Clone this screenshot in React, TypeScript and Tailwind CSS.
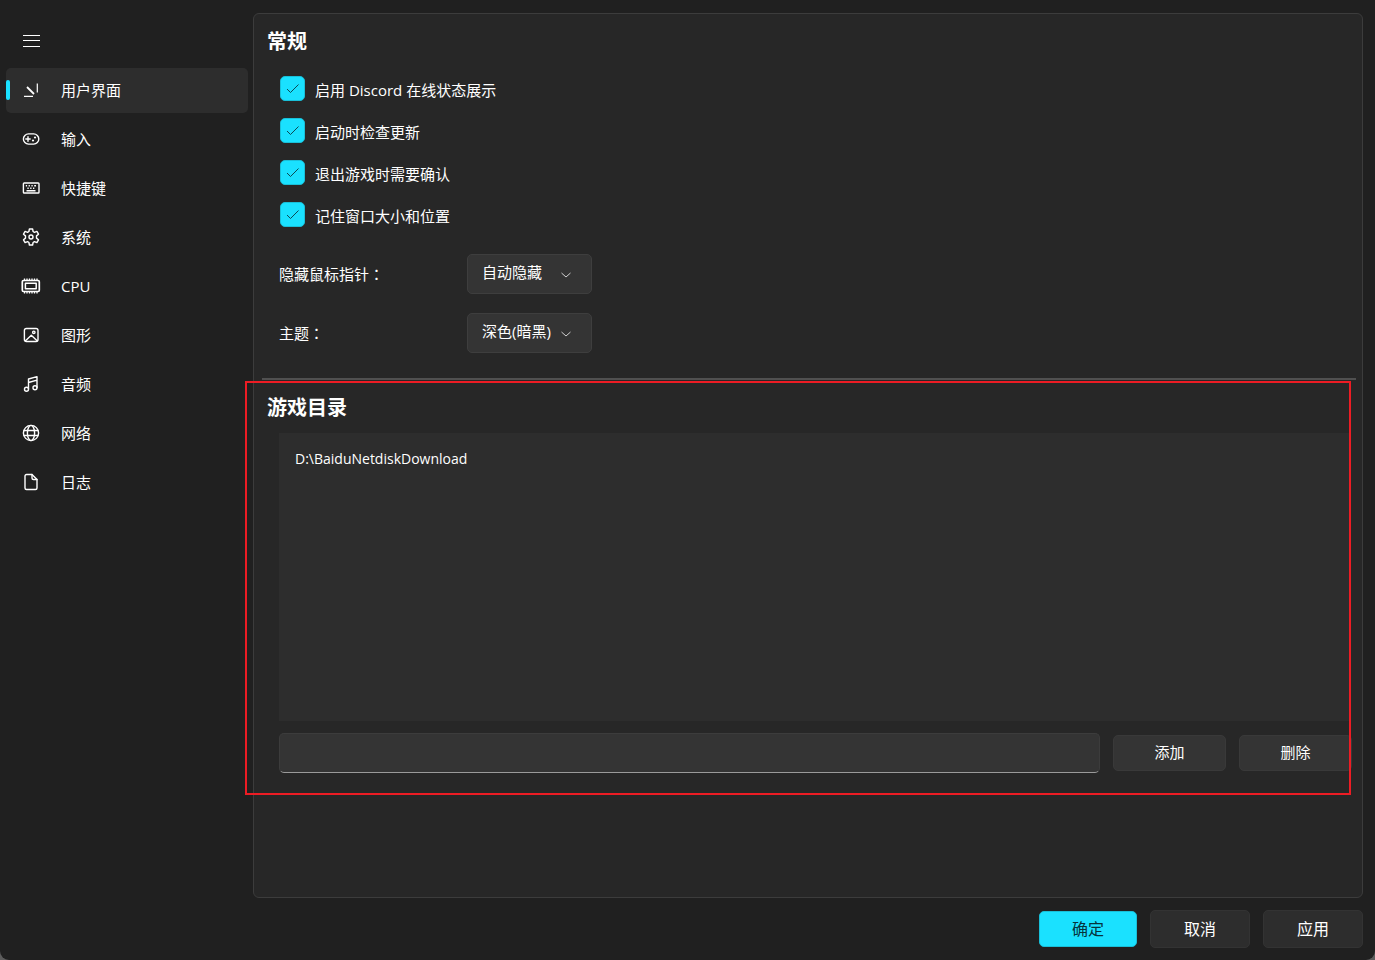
import React, { useState } from 'react';

const Icon = ({ children }: { children: React.ReactNode }) => (
  <svg
    viewBox="0 0 20 20"
    className="w-5 h-5"
    fill="none"
    stroke="currentColor"
    strokeWidth="1.4"
    strokeLinecap="round"
    strokeLinejoin="round"
    aria-hidden="true"
  >
    {children}
  </svg>
);

const InterfaceIcon = () => (
  <Icon>
    <path d="M3 16.3h9M16.3 3.5v9" strokeLinecap="butt" strokeWidth="1.2" />
    <path d="M6 7l7 7" strokeLinecap="butt" strokeWidth="1.8" />
  </Icon>
);

const GamepadIcon = () => (
  <Icon>
    <rect x="2.4" y="4.9" width="15.4" height="10.2" rx="5.1" />
    <path d="M4.8 10h4.4M7 7.8v4.4" />
    <circle cx="14" cy="8.5" r="1.1" fill="currentColor" stroke="none" />
    <circle cx="12" cy="11.5" r="1.1" fill="currentColor" stroke="none" />
  </Icon>
);

const KeyboardIcon = () => (
  <Icon>
    <rect x="2.4" y="5" width="15.6" height="10" rx="0.8" />
    <path
      d="M4.8 7.8h1.3M7.6 7.8h1.3M10.4 7.8h1.3M13.2 7.8h1.8M6.4 10.2h1.3M9.2 10.2h1.3M12 10.2h1.3M5.5 12.7h9"
      strokeLinecap="butt"
    />
  </Icon>
);

const GearIcon = () => (
  <Icon>
    <path d="M8.4 2h3.2l.5 2.5 1.3.8 2.5-.9 1.6 2.8-2 1.7v2.200l2 1.700-1.600 2.800-2.500-.9-1.300.8-.5 2.500H8.400l-.5-2.500-1.300-.8-2.500.9-1.600-2.800 2-1.700V8.900l-2-1.700 1.600-2.800 2.500.9 1.300-.8z" />
    <circle cx="10" cy="10" r="2" />
  </Icon>
);

const CpuIcon = () => (
  <Icon>
    <rect x="1.3" y="4.5" width="17" height="11" rx="1.2" strokeWidth="1.7" />
    <rect x="4.4" y="7.3" width="10.8" height="5.4" strokeWidth="1.5" />
    <path
      d="M3.5 2.5v2M6 2.5v2M8.5 2.5v2M11 2.5v2M13.5 2.5v2M16 2.5v2M3.5 15.5v2M6 15.5v2M8.5 15.5v2M11 15.5v2M13.5 15.5v2M16 15.5v2"
      strokeLinecap="butt"
      strokeWidth="1.3"
    />
  </Icon>
);

const ImageIcon = () => (
  <Icon>
    <rect x="3.4" y="3.5" width="13.6" height="13" rx="2" />
    <path d="M4.5 15.8l5.800-5.500 5.800 5.500" />
    <circle cx="12.8" cy="7.3" r="1.2" />
  </Icon>
);

const MusicIcon = () => (
  <Icon>
    <path d="M7.5 15V5L16 2.600v11M7.500 8.500L16 6.100" />
    <circle cx="5.5" cy="15.3" r="2" />
    <circle cx="14" cy="13.8" r="2" />
  </Icon>
);

const GlobeIcon = () => (
  <Icon>
    <circle cx="10" cy="10" r="7.6" />
    <ellipse cx="10" cy="10" rx="3.6" ry="7.6" />
    <path d="M3.2 7.5h13.600M3.200 12.500h13.600" />
  </Icon>
);

const FileIcon = () => (
  <Icon>
    <path d="M5.5 2.500H11l5 5V16a1.500 1.500 0 0 1-1.500 1.500h-9A1.500 1.500 0 0 1 4 16V4a1.500 1.500 0 0 1 1.500-1.500z" />
    <path d="M11 2.500V6a1.500 1.500 0 0 0 1.500 1.500H16" />
  </Icon>
);

const navItems = [
  { label: '用户界面', icon: InterfaceIcon },
  { label: '输入', icon: GamepadIcon },
  { label: '快捷键', icon: KeyboardIcon },
  { label: '系统', icon: GearIcon },
  { label: 'CPU', icon: CpuIcon },
  { label: '图形', icon: ImageIcon },
  { label: '音频', icon: MusicIcon },
  { label: '网络', icon: GlobeIcon },
  { label: '日志', icon: FileIcon },
];

const generalOptions = [
  { id: 'discord', label: '启用 Discord 在线状态展示' },
  { id: 'updates', label: '启动时检查更新' },
  { id: 'confirm-exit', label: '退出游戏时需要确认' },
  { id: 'remember-window', label: '记住窗口大小和位置' },
];

const selects = [
  { id: 'cursor', label: '隐藏鼠标指针', options: ['自动隐藏', '从不', '总是'] },
  { id: 'theme', label: '主题', options: ['深色(暗黑)', '浅色', '自动'] },
];

const Sidebar = () => {
  const [active, setActive] = useState('用户界面');

  return (
    <aside className="w-[253px] shrink-0 pl-[6px] pr-[5px] pt-[18px]">
      <button type="button" aria-label="菜单" className="w-[50px] h-[45px] flex items-center justify-center">
        <svg viewBox="0 0 18 12" className="w-[18px] h-3" stroke="currentColor" aria-hidden="true">
          <path d="M1 .5h17M1 5.500h17M1 11.500h17" />
        </svg>
      </button>
      <nav className="flex flex-col gap-1 mt-[5px]">
        {navItems.map((item) => (
          <button
            key={item.label}
            type="button"
            onClick={() => setActive(item.label)}
            className={`relative h-[45px] flex items-center gap-5 pl-[15px] pb-[2px] rounded-[5px] text-left ${
              active === item.label ? 'bg-[#2d2d2d]' : ''
            }`}
          >
            {active === item.label && (
              <span className="absolute left-0 top-3 w-1 h-5 rounded-sm bg-[#1ae1ff]" />
            )}
            <item.icon />
            <span>{item.label}</span>
          </button>
        ))}
      </nav>
    </aside>
  );
};

const CheckOption = ({ id, label }: { id: string; label: string }) => (
  <div className="h-[42px] flex items-center gap-[10px]">
    <span className="relative w-[25px] h-[25px]">
      <input
        id={id}
        type="checkbox"
        defaultChecked
        className="peer block appearance-none w-[25px] h-[25px] rounded-[5px] border border-[#9a9a9a] checked:bg-[#1ae1ff] checked:border-[#19bfd8]"
      />
      <svg
        viewBox="0 0 25 25"
        className="absolute inset-0 pointer-events-none opacity-0 peer-checked:opacity-100"
        fill="none"
        stroke="#0b4a54"
        aria-hidden="true"
      >
        <path d="M7 13l3.500 3.500 8-8" />
      </svg>
    </span>
    <label htmlFor={id} className="pt-1">{label}</label>
  </div>
);

const SelectRow = ({ id, label, options }: { id: string; label: string; options: string[] }) => (
  <div className="flex items-center">
    <label htmlFor={id} className="w-[188px]">
      {label}
      <span className="font-['Noto_Sans_CJK_TC',sans-serif]" lang="zh-TW">：</span>
    </label>
    <span className="relative">
      <select
        id={id}
        className="block appearance-none w-[125px] h-10 pl-[14px] pb-[5px] rounded-[5px] border border-[#3e3e3e] bg-[#343434]"
      >
        {options.map((option) => (
          <option key={option}>{option}</option>
        ))}
      </select>
      <svg
        viewBox="0 0 12 8"
        className="absolute right-5 top-[17px] w-3 h-2 pointer-events-none"
        fill="none"
        stroke="#d0d0d0"
        aria-hidden="true"
      >
        <path d="M1.5 2L6 6l4.500-4" />
      </svg>
    </span>
  </div>
);

const GameFolders = () => {
  const [path, setPath] = useState('');
  const buttonClass = 'w-[113px] h-9 pb-[2px] rounded-[5px] border border-[#393939] bg-[#343434]';

  return (
    <section className="relative pt-[14px] pb-[22px]">
      <h2 className="pl-[5px] text-xl leading-7 font-bold">游戏目录</h2>
      <ul className="ml-[17px] mr-[7px] mt-[11px] h-72 bg-[#2d2d2d] px-4 py-[14px]">
        <li className="text-sm leading-6">D:\BaiduNetdiskDownload</li>
      </ul>
      <div className="flex items-center gap-[13px] ml-[17px] mr-1 mt-3">
        <input
          type="text"
          aria-label="游戏目录路径"
          value={path}
          onChange={(e) => setPath(e.target.value)}
          className="flex-1 min-w-0 h-10 px-3 rounded-[5px] border border-[#3c3c3c] border-b-[#9a9a9a] bg-[#343434] outline-none"
        />
        <button type="button" className={buttonClass}>添加</button>
        <button type="button" className={buttonClass}>删除</button>
      </div>
      {/* highlight frame around the folder settings */}
      <div className="absolute -left-[17px] right-[5px] top-px bottom-0 border-2 border-[#ed1c24] pointer-events-none" />
    </section>
  );
};

const App = () => {
  return (
    <div className="bg-[#5c5c5c]">
      <div className="min-h-screen flex rounded-b-[9px] bg-[#202020] text-white text-[15px] leading-6 font-['Open_Sans','Noto_Sans_CJK_SC',sans-serif]">
        <Sidebar />
        <div className="flex-1 min-w-0 flex flex-col pt-[13px] pr-3 pb-3">
          <main className="flex-1 rounded-[6px] border border-[#3c3c3c] bg-[#272727] pl-2 pr-[6px]">
            <section className="pt-[14px] pb-[25px]">
              <h2 className="pl-[5px] text-xl leading-7 font-bold">常规</h2>
              <div className="pl-[18px] mt-[11px]">
                {generalOptions.map((option) => (
                  <CheckOption key={option.id} {...option} />
                ))}
              </div>
              <div className="flex flex-col gap-[19px] pl-[17px] mt-[19px]">
                {selects.map((select) => (
                  <SelectRow key={select.id} {...select} />
                ))}
              </div>
            </section>
            <hr className="border-t-2 border-[#505050]" />
            <GameFolders />
          </main>
          <footer className="flex items-center justify-end gap-[13px] mt-3 text-base">
            <button
              type="button"
              className="w-[98px] h-9 rounded-[5px] border border-[#19bfd8] bg-[#1ae1ff] text-[#06343c]"
            >
              确定
            </button>
            <button type="button" className="w-[100px] h-[38px] rounded-[5px] border border-[#333333] bg-[#2d2d2d]">
              取消
            </button>
            <button type="button" className="w-[100px] h-[38px] rounded-[5px] border border-[#333333] bg-[#2d2d2d]">
              应用
            </button>
          </footer>
        </div>
      </div>
    </div>
  );
};

export default App;
